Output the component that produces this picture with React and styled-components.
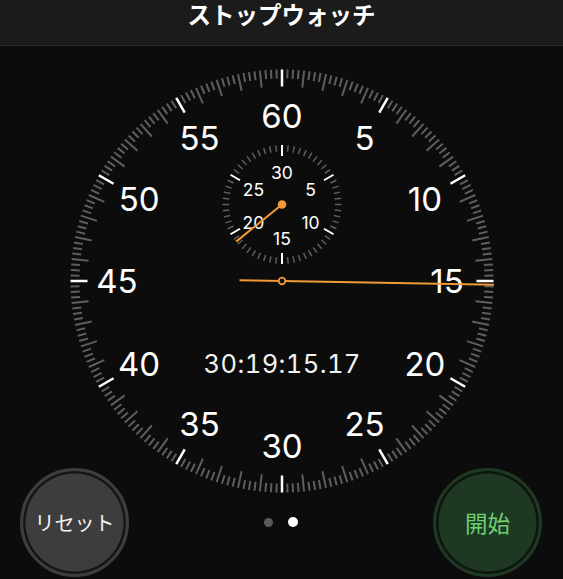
import React from 'react';
import styled, { createGlobalStyle } from 'styled-components';

const GlobalStyle = createGlobalStyle`
  html, body {
    margin: 0;
    padding: 0;
    background: #0c0c0c;
  }
`;

const Screen = styled.div`
  width: 563px;
  height: 579px;
  overflow: hidden;
  background: #0c0c0c;
  display: flex;
  flex-direction: column;
  font-family: "Inter", "Liberation Sans", "Noto Sans CJK JP", sans-serif;
`;

const TopBar = styled.header`
  height: 45px;
  box-sizing: content-box;
  flex-shrink: 0;
  background: #1b1b1b;
  border-bottom: 1px solid #2b2b2b;
  display: flex;
  justify-content: center;
  align-items: flex-start;
`;

const Title = styled.h1`
  margin: 2px 0 0;
  font-family: "Noto Sans CJK JP", sans-serif;
  font-size: 23.5px;
  font-weight: 700;
  line-height: 24px;
  color: #ffffff;
`;

const DialArea = styled.main`
  padding-top: 15px;
  display: flex;
  justify-content: center;
`;

const Face = styled.svg`
  display: block;
  overflow: visible;
`;

const Readout = styled.text`
  fill: #f2f2f2;
  font-size: 25.5px;
  font-variant-numeric: tabular-nums;
  letter-spacing: 0.4px;
`;

const Controls = styled.div`
  height: 110px;
  display: flex;
  align-items: center;
  justify-content: space-between;
  padding: 0 21px 0 20px;
`;

const variants = {
  reset: { fill: '#3d3d3d', gap: '#151515', ink: '#f4f4f4', size: 20 },
  start: { fill: '#1f3823', gap: '#0c160e', ink: '#6bd170', size: 22.5 },
};

const RoundButton = styled.button`
  width: 109px;
  height: 109px;
  box-sizing: border-box;
  border-radius: 50%;
  padding: 0;
  border: 3px solid ${p => variants[p.$variant].fill};
  background: ${p => variants[p.$variant].fill};
  box-shadow: inset 0 0 0 2.5px ${p => variants[p.$variant].gap};
  color: ${p => variants[p.$variant].ink};
  font-family: "Noto Sans CJK JP", sans-serif;
  font-size: ${p => variants[p.$variant].size}px;
  font-weight: 400;
  display: flex;
  align-items: center;
  justify-content: center;
  cursor: pointer;
`;

const Pager = styled.div`
  display: flex;
  align-items: center;
  gap: 14.5px;
`;

const Dot = styled.span`
  width: ${p => (p.$active ? 10 : 9)}px;
  height: ${p => (p.$active ? 10 : 9)}px;
  border-radius: 50%;
  background: ${p => (p.$active ? '#ffffff' : '#5b5b5b')};
`;

const ORANGE = '#f19b38';
const CX = 220;
const CY = 220;
const SUB_CY = 143.5;

const polar = (cx, cy, r, deg) => {
  const a = (deg * Math.PI) / 180;
  return [cx + r * Math.sin(a), cy - r * Math.cos(a)];
};

// 4 ticks per second, white every 5 s
const MainTicks = () =>
  Array.from({ length: 240 }, (_, i) => {
    const deg = i * 1.5;
    const major = i % 20 === 0;
    const second = i % 4 === 0;
    const len = major || second ? 17 : 9;
    const [x1, y1] = polar(CX, CY, 211.5, deg);
    const [x2, y2] = polar(CX, CY, 211.5 - len, deg);
    return (
      <line
        key={i}
        x1={x1}
        y1={y1}
        x2={x2}
        y2={y2}
        stroke={major ? '#ffffff' : '#5e5e5e'}
        strokeWidth={major ? 2.5 : 2}
      />
    );
  });

const MainNumbers = () =>
  Array.from({ length: 12 }, (_, k) => {
    const [x, y] = polar(CX, CY, 165, k * 30);
    return (
      <text key={k} x={x} y={y + 12} fill="#ffffff" fontSize="33" textAnchor="middle">
        {k === 0 ? 60 : k * 5}
      </text>
    );
  });

const SubTicks = () =>
  Array.from({ length: 60 }, (_, i) => {
    const major = i % 10 === 0;
    const len = major ? 11 : 6.5;
    const [x1, y1] = polar(CX, SUB_CY, 59.5, i * 6);
    const [x2, y2] = polar(CX, SUB_CY, 59.5 - len, i * 6);
    return (
      <line
        key={i}
        x1={x1}
        y1={y1}
        x2={x2}
        y2={y2}
        stroke={major ? '#ffffff' : '#5e5e5e'}
        strokeWidth={major ? 2 : 1.5}
      />
    );
  });

const SubNumbers = () =>
  Array.from({ length: 6 }, (_, k) => {
    const [x, y] = polar(CX, SUB_CY + 1.5, 33, k * 60);
    return (
      <text key={k} x={x} y={y + 6.3} fill="#ffffff" fontSize="17.5" textAnchor="middle">
        {k === 0 ? 30 : k * 5}
      </text>
    );
  });

const Dial = ({ seconds, subAngle, readout }) => {
  const deg = (seconds / 60) * 360;
  const [tx, ty] = polar(CX, CY, 212, deg);
  const [bx, by] = polar(CX, CY, 42.5, deg + 180);
  const [sx, sy] = polar(CX, SUB_CY, 59, subAngle);
  return (
    <Face width="440" height="406" viewBox="0 0 440 406">
      <MainTicks />
      <MainNumbers />
      <Readout x={CX + 0.2} y={312.3} textAnchor="middle">
        {readout}
      </Readout>
      <SubTicks />
      <SubNumbers />
      <line x1={CX} y1={SUB_CY} x2={sx} y2={sy} stroke={ORANGE} strokeWidth="2" />
      <circle cx={CX} cy={SUB_CY} r="4.3" fill={ORANGE} />
      <line x1={bx} y1={by} x2={tx} y2={ty} stroke={ORANGE} strokeWidth="2" />
      <circle cx={CX} cy={CY} r="3.3" fill="#0c0c0c" stroke={ORANGE} strokeWidth="1.8" />
    </Face>
  );
};

const App = () => (
  <>
    <GlobalStyle />
    <Screen>
      <TopBar>
        <Title>ストップウォッチ</Title>
      </TopBar>
      <DialArea>
        <Dial seconds={15.17} subAngle={231} readout="30:19:15.17" />
      </DialArea>
      <Controls>
        <RoundButton $variant="reset">リセット</RoundButton>
        <Pager>
          <Dot />
          <Dot $active />
        </Pager>
        <RoundButton $variant="start">開始</RoundButton>
      </Controls>
    </Screen>
  </>
);

export default App;
